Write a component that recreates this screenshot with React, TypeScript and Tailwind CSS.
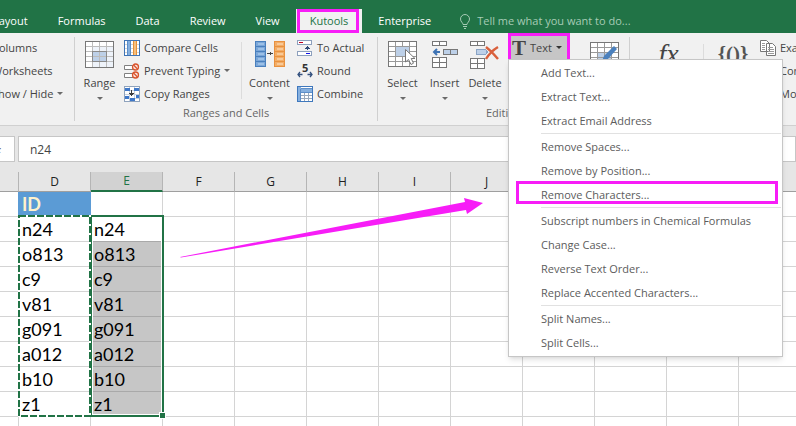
import type { ReactNode } from 'react'
import { clsx } from 'clsx'

const tabs = ['Formulas', 'Data', 'Review', 'View', 'Kutools', 'Enterprise']

const columns = ['D', 'E', 'F', 'G', 'H', 'I', 'J', 'K', 'L', 'M', 'N']

const ids = ['n24', 'o813', 'c9', 'v81', 'g091', 'a012', 'b10', 'z1']

const emptyRows = [10, 11, 12, 13, 14, 15]

const menuGroups = [
  ['Add Text...', 'Extract Text...', 'Extract Email Address'],
  ['Remove Spaces...', 'Remove by Position...', 'Remove Characters...'],
  [
    'Subscript numbers in Chemical Formulas',
    'Change Case...',
    'Reverse Text Order...',
    'Replace Accented Characters...',
  ],
  ['Split Names...', 'Split Cells...'],
]

function Caret({ dark }: { dark?: boolean }) {
  return (
    <svg width="6" height="3" viewBox="0 0 6 3" className="shrink-0" aria-hidden="true">
      <path d="M0 0h6L3 3z" fill={dark ? '#333' : '#6a6a6a'} />
    </svg>
  )
}

function RangeIcon() {
  return (
    <svg width="29" height="27" viewBox="0 0 29 27" shapeRendering="crispEdges" aria-hidden="true">
      <path d="M0 0h29v27H0z" fill="#fff" />
      <path d="M7 5h22v21H7z" fill="#eef3fa" />
      <path d="M8 11h13v9H8z" fill="#bdd0e8" />
      <path d="M1 5.5h27M1 10.5h27M1 15.5h27M1 20.5h27M7.5 1v25M14.5 1v25M21.5 1v25" stroke="#bcbcbc" />
      <path d="M7.5 10.5h14v10h-14z" fill="none" stroke="#8a8a8a" />
      <path d="M.5.5h28v26H.5z" fill="none" stroke="#777" />
    </svg>
  )
}

function CompareIcon() {
  return (
    <svg width="16" height="16" viewBox="0 0 16 16" shapeRendering="crispEdges" aria-hidden="true">
      <path d="M0 0h16v16H0z" fill="#fff" />
      <path d="M1 4.5h14M1 8.5h14M1 12.5h14" stroke="#d4d4d4" />
      <path d="M3 1h4v14H3z" fill="#86b0df" />
      <path d="M3.5 1v14M6.5 1v14" stroke="#5b8fca" />
      <path d="M9 1h4v14H9z" fill="#f5bf80" />
      <path d="M9.5 1v14M12.5 1v14" stroke="#e69138" />
      <path d="M.5.5h15v15H.5z" fill="none" stroke="#3f74b5" />
    </svg>
  )
}

function PreventIcon() {
  return (
    <svg width="16" height="16" viewBox="0 0 16 16" aria-hidden="true">
      <path d="M.5 2.5h9v4h-9zM.5 10.5h9v4h-9z" fill="#fff" stroke="#808080" />
      <circle cx="11.5" cy="4" r="3" fill="#fbe3dc" stroke="#d9532c" strokeWidth="1.3" />
      <path d="M9.5 2l4 4" stroke="#d9532c" strokeWidth="1.2" />
      <circle cx="11.5" cy="12" r="3" fill="#fbe3dc" stroke="#d9532c" strokeWidth="1.3" />
      <path d="M9.5 10l4 4" stroke="#d9532c" strokeWidth="1.2" />
    </svg>
  )
}

function CopyRangesIcon() {
  return (
    <svg width="16" height="16" viewBox="0 0 16 16" shapeRendering="crispEdges" aria-hidden="true">
      <path d="M.5.5h15v15H.5z" fill="#fff" stroke="#8fa3bd" />
      <path d="M1 4.5h14M1 8.5h14M1 12.5h14M5.5 1v14M10.5 1v14" stroke="#c9d2de" />
      <path d="M1 2h5v3H1zM10 2h5v3h-5zM1 10h4v3H1zM6 12h5v3H6zM12 9h3v3h-3z" fill="#3f78c9" />
      <path d="M7.5 4v6M5 7.5h5M6 8.5h3" stroke="#3b3b3b" />
    </svg>
  )
}

function ContentIcon() {
  return (
    <svg width="30" height="27" viewBox="0 0 30 27" shapeRendering="crispEdges" aria-hidden="true">
      <path d="M0 0h11v26H0z" fill="#4a80bd" />
      <path d="M19 0h11v26H19z" fill="#e8913f" />
      {[1, 6, 11, 16, 21].map((y) => (
        <g key={y}>
          <rect x="1" y={y} width="9" height="4" fill="#7ba7d9" />
          <rect x="3" y={y + 1} width="6" height="2" fill="#9cc0e6" />
          <rect x="20" y={y} width="9" height="4" fill="#f3ad66" />
          <rect x="22" y={y + 1} width="6" height="2" fill="#f8c998" />
        </g>
      ))}
      <path d="M12 12.5h6M15.5 11v3M16.5 12v1" stroke="#444" />
    </svg>
  )
}

function ActualIcon() {
  return (
    <svg width="16" height="16" viewBox="0 0 16 16" shapeRendering="crispEdges" aria-hidden="true">
      <path d="M.5.5h14v4H.5zM.5 11.5h14v4H.5z" fill="#fff" stroke="#8da0bd" />
      <path d="M2 2.5h4" stroke="#c00020" />
      <path d="M9 13.5h4" stroke="#1414e6" />
      <path d="M10.5 6v4M9 7.5h3M8 8.5h5" stroke="#2f4a78" />
    </svg>
  )
}

function RoundIcon() {
  return (
    <svg width="16" height="16" viewBox="0 0 16 16" aria-hidden="true">
      <text x="5" y="9" fontSize="11" fontWeight="700" fill="#333">
        5
      </text>
      <path
        d="M5.5 11.5H1M3 9l-2 2.5 2 2.5M10.5 11.5H15M13 9l2 2.5-2 2.5"
        fill="none"
        stroke="#34517f"
        strokeWidth="1.3"
      />
    </svg>
  )
}

function CombineIcon() {
  return (
    <svg width="16" height="16" viewBox="0 0 16 16" shapeRendering="crispEdges" aria-hidden="true">
      <path d="M.5.5h15v15H.5z" fill="#fff" stroke="#3f78bd" />
      <path d="M1 1h3v14H1zM4 3h11v3H4z" fill="#86b0df" />
      <path d="M4 9.5h11M4 12.5h11M7.5 7v8M11.5 7v8" stroke="#9aa9bc" />
      <path d="M3.5 3v12M4 2.5h11M4 6.5h11" stroke="#5f8fc8" />
    </svg>
  )
}

function SelectIcon() {
  return (
    <svg width="29" height="27" viewBox="0 0 29 27" aria-hidden="true">
      <g shapeRendering="crispEdges">
        <path d="M.5.5h28v25H.5z" fill="#fff" />
        <path d="M8 6h13v9H8z" fill="#bdd0e8" />
        <path d="M1 5.5h27M1 10.5h27M1 15.5h27M1 20.5h27M7.5 1v25M14.5 1v25M21.5 1v25" stroke="#999" />
        <path d="M8 10.5h13M14.5 6v9" stroke="#bdd0e8" />
        <path d="M.5.5h28v25H.5z" fill="none" stroke="#777" />
      </g>
      <path d="M17.5 8.5v12.5l3-2.5 2.5 5 2.5-1.3-2.3-4.7h3.8z" fill="#fff" stroke="#777" />
    </svg>
  )
}

function InsertIcon() {
  return (
    <svg width="26" height="28" viewBox="0 0 26 28" shapeRendering="crispEdges" aria-hidden="true">
      <path d="M.5.5h14v4H.5zM.5 16.5h14v10H.5z" fill="#fff" stroke="#777" />
      <path d="M7.5 0v5M7.5 16v11M0 21.5h15" stroke="#777" />
      <path d="M11.5 8.5h14v5h-14z" fill="#bdd0e8" stroke="#777" />
      <path d="M18.5 8v6" stroke="#777" />
      <path d="M2 11h6M5 8l-3 3 3 3" fill="none" stroke="#3f74b5" strokeWidth="2" shapeRendering="auto" />
    </svg>
  )
}

function DeleteIcon() {
  return (
    <svg width="30" height="28" viewBox="0 0 30 28" shapeRendering="crispEdges" aria-hidden="true">
      <path d="M.5.5h14v4H.5zM.5 17.5h14v10H.5z" fill="#fff" stroke="#777" />
      <path d="M7.5 0v5M7.5 17v11M0 22.5h15" stroke="#777" />
      <path d="M6.5 8.5h9l2 2.5-2 2.5h-9z" fill="#bdd0e8" stroke="#8aa4c5" />
      <path
        d="M16 6c4 3 8 7 12 12M28 6c-5 3-9 7-12 12"
        fill="none"
        stroke="#d9603c"
        strokeWidth="2.4"
        shapeRendering="auto"
      />
    </svg>
  )
}

function EditIcon() {
  return (
    <svg width="29" height="27" viewBox="0 0 29 27" aria-hidden="true">
      <g shapeRendering="crispEdges">
        <path d="M.5.5h28v26H.5z" fill="#fff" />
        <path d="M8 11h13v9H8z" fill="#bdd0e8" />
        <path d="M1 5.5h27M1 10.5h27M1 15.5h27M7.5 1v25M14.5 1v25M21.5 1v25" stroke="#999" />
        <path d="M.5.5h28v26H.5z" fill="none" stroke="#777" />
      </g>
      <path d="M12 19l2-5L24 4l3 3-10 11z" fill="#4a80bd" />
    </svg>
  )
}

function PagesIcon() {
  return (
    <svg width="16" height="16" viewBox="0 0 16 16" aria-hidden="true">
      <path d="M.5.5h6l3 3v8h-9zM6.5 3.5h6l3 3v9h-9z" fill="#fff" stroke="#777" />
      <path d="M2 3.5h3M2 5.5h3M2 7.5h3M2 9.5h3M8 7.5h5M8 9.5h6M8 11.5h6M8 13.5h6" stroke="#999" />
    </svg>
  )
}

function BigButton({ icon, label, className }: { icon: ReactNode; label: string; className: string }) {
  return (
    <button className={clsx('flex shrink-0 flex-col items-center pt-[5px]', className)}>
      <span className="flex h-7">{icon}</span>
      <span className="mt-1 leading-5">{label}</span>
      <span className="mt-px flex h-2 items-center">
        <Caret />
      </span>
    </button>
  )
}

function SmallButton({ icon, label, caret }: { icon?: ReactNode; label: string; caret?: boolean }) {
  return (
    <button className="flex h-[23px] items-center gap-1 whitespace-nowrap">
      {icon}
      <span>{label}</span>
      {caret && <Caret />}
    </button>
  )
}

function Group({ title, className, children }: { title?: string; className: string; children: ReactNode }) {
  return (
    <div className={clsx('mb-1 flex shrink-0 flex-col justify-between', className)}>
      <div className="flex h-[69px]">{children}</div>
      {title && <div className="text-center leading-4 text-[#666]">{title}</div>}
    </div>
  )
}

function Divider() {
  return <div className="mb-1 mt-px w-px shrink-0 bg-[#d0d0d0]" />
}

function TabBar() {
  return (
    <nav className="flex h-[33px] shrink-0 items-end gap-0.5 overflow-hidden whitespace-nowrap bg-[#217346] text-white">
      <a href="#layout" className="-ml-[21px] flex h-6 items-center px-[14px]">
        Layout
      </a>
      {tabs.map((tab) => {
        const active = tab === 'Kutools'
        return (
          <a
            key={tab}
            href={`#${tab.toLowerCase()}`}
            className={clsx('relative flex h-6 items-center px-[14px]', active && 'bg-[#f1f1f1] text-[#217346]')}
          >
            {tab}
            {active && <span className="absolute inset-y-0 left-px right-[3px] border-[3px] border-[#f71df7]" />}
          </a>
        )
      })}
      <button className="ml-3 flex h-6 items-center gap-1.5 text-[#a6cbb5]">
        <svg width="12" height="15" viewBox="0 0 12 15" fill="none" stroke="currentColor" aria-hidden="true">
          <path d="M4 10.5C4 8.5 1.5 8 1.5 5a4.5 4.5 0 0 1 9 0c0 3-2.5 3.5-2.5 5.5zM4 12.5h4M5 14.5h2" />
        </svg>
        Tell me what you want to do...
      </button>
    </nav>
  )
}

function Ribbon() {
  return (
    <section className="flex h-[93px] shrink-0 overflow-hidden border-b border-[#d0d0d0] bg-[#f1f1f1] pt-[3px] text-[#444]">
      <Group className="-ml-2 w-[82px]">
        <div className="flex flex-col">
          <SmallButton label="Columns" />
          <SmallButton label="Worksheets" />
          <SmallButton label="Show / Hide" caret />
        </div>
      </Group>
      <Divider />

      <Group title="Ranges and Cells" className="w-[302px]">
        <BigButton icon={<RangeIcon />} label="Range" className="w-[49px]" />
        <div className="flex w-[117px] flex-col">
          <SmallButton icon={<CompareIcon />} label="Compare Cells" />
          <SmallButton icon={<PreventIcon />} label="Prevent Typing" caret />
          <SmallButton icon={<CopyRangesIcon />} label="Copy Ranges" />
        </div>
        <div className="my-1.5 w-px bg-[#dcdcdc]" />
        <BigButton icon={<ContentIcon />} label="Content" className="w-[55px]" />
        <div className="flex flex-col">
          <SmallButton icon={<ActualIcon />} label="To Actual" />
          <SmallButton icon={<RoundIcon />} label="Round" />
          <SmallButton icon={<CombineIcon />} label="Combine" />
        </div>
      </Group>
      <Divider />

      <Group title="Editing" className="w-[251px]">
        <BigButton icon={<SelectIcon />} label="Select" className="w-[49px]" />
        <BigButton icon={<InsertIcon />} label="Insert" className="w-[35px]" />
        <BigButton icon={<DeleteIcon />} label="Delete" className="w-[46px]" />
        <div className="-mt-[3px] mr-5 h-[29px] w-[62px] shrink-0">
          <button className="flex size-full items-center gap-1 border-[3px] border-[#f71df7] bg-[#c6c6c6] pl-px">
            <span className="font-['Liberation_Serif',serif] text-[21px] font-bold leading-5">T</span>
            <span>Text</span>
            <Caret dark />
          </button>
        </div>
        <button aria-label="Edit cells" className="flex shrink-0 pt-1.5">
          <EditIcon />
        </button>
      </Group>
      <Divider />

      <Group className="w-[73px]">
        <button className="flex w-full justify-center pl-1 pt-1 font-['Liberation_Serif',serif] text-[28px] italic leading-7">
          fx
        </button>
      </Group>
      <div className="mb-5 mt-2 w-px bg-[#dcdcdc]" />
      <Group className="min-w-0 flex-1">
        <button className="w-14 shrink-0 self-start pl-0.5 pt-2 font-['Liberation_Serif',serif] text-[21px] font-bold leading-5 text-[#555]">
          {'{()}'}
        </button>
        <div className="flex flex-col">
          <SmallButton icon={<PagesIcon />} label="Exact Copy" />
          <SmallButton icon={<PagesIcon />} label="Convert Refers" />
          <SmallButton icon={<PagesIcon />} label="More" />
        </div>
      </Group>
    </section>
  )
}

function FormulaBar() {
  return (
    <div className="flex shrink-0 gap-[3px] pt-[10px] text-[#444]">
      <div className="flex h-[26px] w-[15px] items-center overflow-hidden border border-l-0 border-[#c6c6c6] bg-white">
        <span className="-ml-1 font-['Liberation_Serif',serif] italic">x</span>
      </div>
      <input
        aria-label="Formula bar"
        defaultValue="n24"
        className="h-[26px] min-w-0 flex-1 border border-[#c6c6c6] bg-white pl-[11px] text-xs outline-none"
      />
    </div>
  )
}

function Sheet() {
  return (
    <div className="relative mt-[10px] min-h-0 flex-1 overflow-hidden">
      <table className="w-[811px] table-fixed border-separate border-spacing-0 bg-white">
        <colgroup>
          <col className="w-[19px]" />
          {columns.map((col) => (
            <col key={col} className="w-[72px]" />
          ))}
        </colgroup>
        <thead>
          <tr className="h-5 bg-[#e6e6e6] text-xs leading-4 text-[#222]">
            <td className="border-b border-r border-[#9f9f9f] border-r-[#b5b5b5] p-0" />
            {columns.map((col) => (
              <th
                key={col}
                scope="col"
                className={clsx(
                  'border-r border-r-[#b5b5b5] p-0 font-normal',
                  col === 'E' ? 'border-b-2 border-b-[#217346] bg-[#d2d2d2] text-[#217346]' : 'border-b border-b-[#9f9f9f]',
                )}
              >
                {col}
              </th>
            ))}
          </tr>
        </thead>
        <tbody className="font-['Lato',sans-serif] text-[18px] leading-6 text-black">
          <tr className="h-[25px]">
            <td className="border-b border-r border-[#d4d4d4] border-r-[#5b9bd5] p-0" />
            <td className="border-b border-r border-[#5b9bd5] bg-[#5b9bd5] p-0 pl-[3px] font-bold text-[#fff2cc]">ID</td>
            {columns.slice(1).map((col) => (
              <td key={col} className="border-b border-r border-[#d4d4d4] p-0" />
            ))}
          </tr>
          {ids.map((id, i) => (
            <tr key={id} className="h-[25px]">
              <td className="border-b border-r border-[#d4d4d4] p-0" />
              <td className="border-b border-r border-[#d4d4d4] p-0 pl-[3px]">{id}</td>
              <td className={clsx('border-b border-r border-[#a9a9a9] p-0 pl-[3px]', i > 0 && 'bg-[#c6c6c6]')}>{id}</td>
              {columns.slice(2).map((col) => (
                <td key={col} className="border-b border-r border-[#d4d4d4] p-0" />
              ))}
            </tr>
          ))}
          {emptyRows.map((row) => (
            <tr key={row} className="h-[25px]">
              <td className="border-b border-r border-[#d4d4d4] p-0" />
              {columns.map((col) => (
                <td key={col} className="border-b border-r border-[#d4d4d4] p-0" />
              ))}
            </tr>
          ))}
        </tbody>
      </table>

      {/* Selected range with its fill handle */}
      <div className="absolute left-[90px] top-[43px] h-[202px] w-[74px] border-2 border-[#217346] shadow-[inset_0_0_0_1px_#fff]">
        <span className="absolute -bottom-1 -right-1 size-[7px] border border-white bg-[#217346]" />
      </div>

      {/* Marching ants round the copied range */}
      <svg className="absolute left-[18px] top-[43px]" width="73" height="202" aria-hidden="true">
        <path d="M1 1h71v200H1z" fill="none" stroke="#fff" strokeWidth="2" />
        <path d="M1 1h71v200H1z" fill="none" stroke="#217346" strokeWidth="2" strokeDasharray="7 2" />
      </svg>
    </div>
  )
}

function TextMenu() {
  return (
    <div className="absolute left-[508px] top-[59px] w-[275px] border border-[#c6c6c6] bg-white py-px text-[#5c5c5c] shadow-md">
      {menuGroups.map((group, i) => (
        <div key={group[0]}>
          {i > 0 && <hr className="mb-px ml-8 mr-px border-[#e1e1e1]" />}
          {group.map((item) => (
            <button key={item} className="relative block h-6 w-full pl-8 text-left">
              {item}
              {item === 'Remove Characters...' && (
                <span className="absolute -top-0.5 left-[7px] right-1 h-[23px] border-[3px] border-[#f71df7]" />
              )}
            </button>
          ))}
        </div>
      ))}
    </div>
  )
}

export default function App() {
  return (
    <div className="relative flex h-screen flex-col overflow-hidden bg-[#e6e6e6] font-['Open_Sans',sans-serif] text-[11px] leading-4">
      <TabBar />
      <Ribbon />
      <FormulaBar />
      <Sheet />
      <svg className="pointer-events-none absolute left-[180px] top-[197px]" width="304" height="62" aria-hidden="true">
        <path d="M0 60L285 5l-1-4 19 5-16 11-1-4L1 60.5z" fill="#f71df7" />
      </svg>
      <TextMenu />
    </div>
  )
}
